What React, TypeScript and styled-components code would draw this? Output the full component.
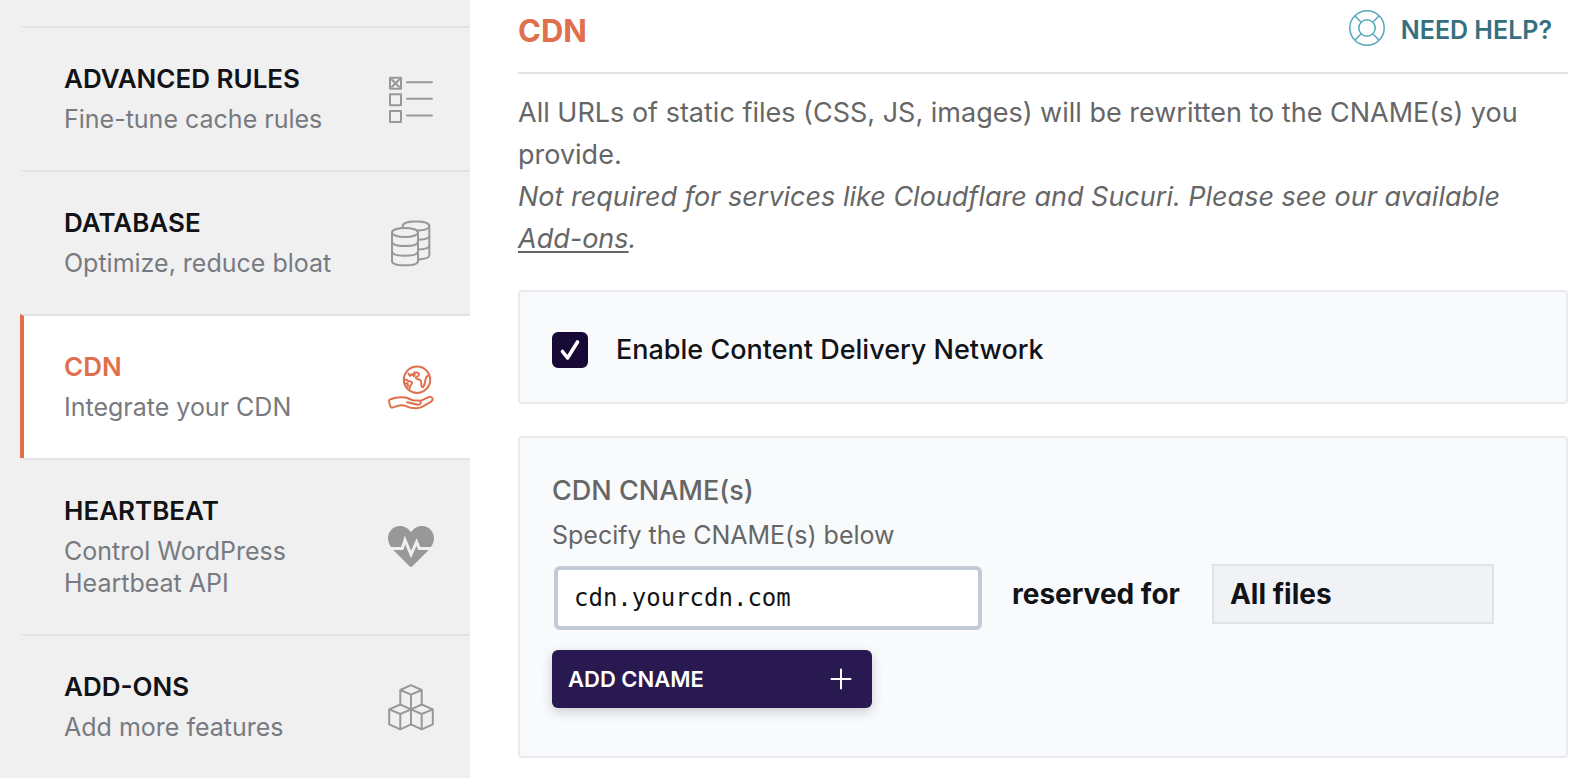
import React, { useState } from "react";
import styled, { createGlobalStyle } from "styled-components";

const GlobalStyle = createGlobalStyle`
  *, *::before, *::after { box-sizing: border-box; }
  body {
    margin: 0;
    background: #ffffff;
    color: #121317;
    font-family: Inter, "Liberation Sans", sans-serif;
  }
`;

const Page = styled.div`
  display: flex;
  height: 100vh;
  overflow: hidden;
`;

const Sidebar = styled.nav`
  flex: 0 0 470px;
  padding: 26px 0 0 20px;
  background: #f0f0f0;
`;

const NavItem = styled.a<{ $active?: boolean }>`
  display: flex;
  align-items: center;
  justify-content: space-between;
  padding: 35px 36px 35px 40px;
  border-top: 2px solid #e0e4e9;
  border-left: 4px solid ${(p) => (p.$active ? "#e0704d" : "transparent")};
  background: ${(p) => (p.$active ? "#ffffff" : "transparent")};
  background-clip: padding-box;
  color: ${(p) => (p.$active ? "#e0704d" : "#979899")};
  text-decoration: none;
`;

const NavText = styled.span`
  display: flex;
  flex-direction: column;
  gap: 8px;
  max-width: 290px;
`;

const NavTitle = styled.span<{ $active?: boolean }>`
  color: ${(p) => (p.$active ? "#e0704d" : "#121317")};
  font-size: 26px;
  font-weight: 600;
  line-height: 32px;
`;

const NavNote = styled.span`
  color: #777a80;
  font-size: 25px;
  line-height: 32px;
`;

const NavIcon = styled.svg`
  flex: none;
  width: 46px;
  height: 46px;
  overflow: visible;
  fill: none;
  stroke: currentColor;
  stroke-width: 2;
  stroke-linejoin: round;
  stroke-linecap: round;
`;

const Main = styled.main`
  flex: 1;
  min-width: 0;
  padding: 0 26px 20px 48px;
`;

const Header = styled.header`
  display: flex;
  align-items: flex-start;
  justify-content: space-between;
  padding: 10px 16px 20px 0;
  border-bottom: 2px solid #e0e4e9;
`;

const Heading = styled.h1`
  margin: 0;
  color: #e0704d;
  font-size: 31px;
  font-weight: 700;
  line-height: 42px;
`;

const HelpLink = styled.a`
  display: flex;
  align-items: flex-start;
  gap: 16px;
  color: #35707f;
  font-size: 25px;
  font-weight: 600;
  line-height: 40px;
  text-decoration: none;
`;

const HelpIcon = styled.svg`
  width: 36px;
  height: 36px;
  fill: none;
  stroke: #54a9b9;
  stroke-width: 1.5;
`;

const Intro = styled.p`
  margin: 18px 0 30px;
  color: #666666;
  font-size: 27px;
  line-height: 42px;

  a { color: inherit; text-underline-offset: 3px; text-decoration-thickness: 2px; }
`;

const Panel = styled.section`
  padding: 32px;
  border: 2px solid #e8eaed;
  border-radius: 4px;
  background: #f9fafc;

  & + & { margin-top: 32px; }
`;

const CheckLabel = styled.label`
  display: flex;
  align-items: center;
  gap: 28px;
  padding: 6px 0 0;
  font-size: 27px;
  font-weight: 500;
  line-height: 40px;
`;

const CheckMark = styled.span`
  display: grid;
  width: 36px;
  height: 36px;

  > * { grid-area: 1 / 1; }

  svg {
    width: 36px;
    height: 36px;
    fill: none;
    stroke: #ffffff;
    stroke-width: 3.6;
    stroke-linecap: round;
    stroke-linejoin: round;
    pointer-events: none;
  }

  input:not(:checked) + svg { visibility: hidden; }
`;

const CheckBox = styled.input`
  appearance: none;
  width: 36px;
  height: 36px;
  margin: 0;
  border: 2px solid #180a37;
  border-radius: 6px;

  &:checked { background: #180a37; }
`;

const FieldTitle = styled.h2`
  margin: 0 0 3px;
  color: #666666;
  font-size: 27px;
  font-weight: 500;
  line-height: 42px;
`;

const FieldNote = styled.label`
  display: block;
  color: #666666;
  font-size: 25px;
  line-height: 40px;
`;

const FieldRow = styled.div`
  display: flex;
  align-items: flex-start;
  margin: 9px 0 18px;
`;

const TextInput = styled.input`
  flex: 0 1 428px;
  min-width: 0;
  height: 64px;
  margin: 2px;
  padding: 0 16px;
  border: 4px solid #c3cad6;
  border-radius: 6px;
  outline: none;
  background: #ffffff;
  color: #121317;
  font-family: "DejaVu Sans Mono", monospace;
  font-size: 24px;
`;

const ReservedLabel = styled.label`
  margin: 0 32px 0 28px;
  font-size: 28px;
  font-weight: 700;
  line-height: 60px;
  white-space: nowrap;
`;

const FileSelect = styled.select`
  appearance: none;
  flex: 0 1 282px;
  height: 60px;
  padding: 0 16px;
  border: 2px solid #e0e2e8;
  border-radius: 0;
  background: #f1f2f6;
  color: #121317;
  font-family: inherit;
  font-size: 28px;
  font-weight: 700;
`;

const AddButton = styled.button`
  display: flex;
  align-items: center;
  justify-content: space-between;
  width: 320px;
  height: 58px;
  margin-bottom: 16px;
  padding: 0 20px 0 16px;
  border: 0;
  border-radius: 6px;
  background: #281950;
  box-shadow: 0 4px 12px rgba(0, 0, 0, 0.18);
  color: #ffffff;
  font-family: inherit;
  font-size: 22px;
  font-weight: 600;
  line-height: 32px;

  svg {
    width: 22px;
    height: 22px;
    stroke: currentColor;
    stroke-width: 2;
    stroke-linecap: round;
  }
`;

const RulesIcon = () => (
  <NavIcon viewBox="0 0 46 46" aria-hidden="true">
    <rect x="2" y="1.700" width="11" height="11" />
    <path d="M4 3.700l7 7M11 3.700l-7 7" />
    <rect x="2" y="18.300" width="11" height="11" />
    <rect x="2" y="35" width="11" height="11" />
    <path d="M19 6.200h25M19 22.800h25M19 39.500h25" />
  </NavIcon>
);

const DatabaseIcon = () => (
  <NavIcon viewBox="0 0 46 46" aria-hidden="true">
    <ellipse cx="17" cy="12.5" rx="13" ry="4.5" />
    <path d="M4 12.5v28.7C4 44 10 45.3 17 45.3S30 44 30 41.2V12.5" />
    <path d="M4 21.5c0 3 6 4.5 13 4.5s13-1.500 13-4.500M4 31.200c0 3 6 4.500 13 4.500s13-1.500 13-4.500" />
    <path d="M14.700 7.500V6c0-3 6-4.600 13.300-4.600S41.300 3 41.300 6v29.500c0 2-4 3.500-10.600 4" />
    <path d="M41.300 6c0 3-5 4.300-12 4.600M41.300 16c0 2.200-4.600 3.400-10.600 3.800M41.300 25.800c0 2.200-4.600 3.400-10.600 3.800" />
  </NavIcon>
);

const CdnIcon = () => (
  <NavIcon viewBox="0 0 46 46" aria-hidden="true">
    <circle cx="29" cy="15.7" r="13.2" />
    <path d="M40.500 11.500c-2 .5-2.500 2-3 4-.3 2.500-.7 5-2 7.200-1 .8-2 .3-2-1 0-2.500.2-4.500-1.200-5.700-1.500-1.200-4-.5-4.500-2.200-.3-1.500 2.500-1.300 3-2.500.4-1.300-.3-2.600-1.700-2.700h-3l.7 2-1 1.500c-.7-.8-1.200-2-1.800-2-.8 0-1 1.800-2 1.600-.8-.2-.9-1.600-1.600-2.200" />
    <path d="M17 15.800c1.500-.8 2 .8 3.200 1.200 1.300.3 3 0 3.800 1.300.4 1.500-1.300 2.300-1.800 3.700l-.5 2.500M17 19.500l2.500-.3.500 3" />
    <path d="M2.500 35.200C7 33.500 13 33 17.500 33.600c3.500.5 5 2.600 8.500 2.800 2.500.2 4.500-.4 6.500.4L39.500 33.600c2.300-1.200 4.500-1 5 .8.400 1.600-.3 2.600-1.700 3.400L34.500 42.600c-3 1.800-7.500 1.900-11.500 1.200-3.500-.7-6-2.600-10-2.500-3.500.2-5.500 1.500-8.500 2.300-1.300.2-2-.5-2.300-1.600L1 37.200c-.2-1 .5-1.600 1.500-2z" />
    <path d="M19 38.200c4 .5 7.500 2.200 11.500 2.600 1.800 0 3-2.800 2-4" />
  </NavIcon>
);

const PulseLine = styled.path`
  stroke: #f0f0f0;
  stroke-width: 3;
  stroke-linejoin: miter;
`;

const HeartbeatIcon = () => (
  <NavIcon viewBox="0 0 46 46" aria-hidden="true">
    <path
      d="M23 8.300C20.500 4.300 16.500 2 12 2 5.200 2 0 7.500 0 14.200c0 4.400 2.300 8.300 5.300 11.800L21.500 42.200q1.500 1.300 3 0L40.700 26C43.700 22.500 46 18.600 46 14.200 46 7.500 40.800 2 34 2c-4.500 0-8.500 2.300-11 6.300z"
      fill="currentColor"
      stroke="none"
    />
    <PulseLine d="M-1 24.400h15.200L17 16l6 14.500 5.600-12.500 2.600 6.400H47" />
  </NavIcon>
);

const AddonsIcon = () => (
  <NavIcon viewBox="0 0 46 46" aria-hidden="true">
    <path d="M23 1.200L33.700 6v14.500L23 25.300 12.300 20.500V6zM12.300 6L23 10.700 33.700 6M23 10.700v14.600" />
    <path d="M12.300 20.500L1.200 25.300v15l11.100 5 10.700-5v-15L12.300 30 1.200 25.300M12.300 30v15.300" />
    <path d="M33.700 20.500l11.100 4.800v15l-11.100 5-10.700-5M23 25.300L33.700 30l11.100-4.700M33.700 30v15.300" />
  </NavIcon>
);

const items = [
  { title: "ADVANCED RULES", note: "Fine-tune cache rules", Icon: RulesIcon },
  { title: "DATABASE", note: "Optimize, reduce bloat", Icon: DatabaseIcon },
  { title: "CDN", note: "Integrate your CDN", Icon: CdnIcon, active: true },
  { title: "HEARTBEAT", note: "Control WordPress Heartbeat API", Icon: HeartbeatIcon },
  { title: "ADD-ONS", note: "Add more features", Icon: AddonsIcon },
];

export default function App() {
  const [enabled, setEnabled] = useState(true);
  const [cname, setCname] = useState("cdn.yourcdn.com");

  return (
    <Page>
      <GlobalStyle />
      <Sidebar>
        {items.map(({ title, note, Icon, active }) => (
          <NavItem key={title} href="#" $active={active} aria-current={active ? "page" : undefined}>
            <NavText>
              <NavTitle $active={active}>{title}</NavTitle>
              <NavNote>{note}</NavNote>
            </NavText>
            <Icon />
          </NavItem>
        ))}
      </Sidebar>
      <Main>
        <Header>
          <Heading>CDN</Heading>
          <HelpLink href="#">
            <HelpIcon viewBox="0 0 36 36" aria-hidden="true">
              <circle cx="18" cy="18" r="17.2" />
              <circle cx="18" cy="18" r="8.200" />
              <path d="M5.800 5.800l6.400 6.400M30.200 5.800l-6.400 6.400M5.800 30.200l6.400-6.400M30.200 30.200l-6.400-6.400" />
            </HelpIcon>
            NEED HELP?
          </HelpLink>
        </Header>
        <Intro>
          All URLs of static files (CSS, JS, images) will be rewritten to the CNAME(s) you provide.
          <br />
          <em>
            Not required for services like Cloudflare and Sucuri. Please see our available{" "}
            <a href="#">Add-ons</a>.
          </em>
        </Intro>
        <Panel>
          <CheckLabel>
            <CheckMark>
              <CheckBox type="checkbox" checked={enabled} onChange={(e) => setEnabled(e.target.checked)} />
              <svg viewBox="0 0 36 36" aria-hidden="true">
                <path d="M10.500 19.500l5 6.500L25.500 10" />
              </svg>
            </CheckMark>
            Enable Content Delivery Network
          </CheckLabel>
        </Panel>
        <Panel>
          <FieldTitle>CDN CNAME(s)</FieldTitle>
          <FieldNote htmlFor="cname">Specify the CNAME(s) below</FieldNote>
          <FieldRow>
            <TextInput id="cname" type="text" value={cname} onChange={(e) => setCname(e.target.value)} />
            <ReservedLabel htmlFor="zone">reserved for</ReservedLabel>
            <FileSelect id="zone">
              <option>All files</option>
            </FileSelect>
          </FieldRow>
          <AddButton type="button">
            ADD CNAME
            <svg viewBox="0 0 22 22" aria-hidden="true">
              <path d="M11 1.500v19M1.500 11h19" />
            </svg>
          </AddButton>
        </Panel>
      </Main>
    </Page>
  );
}
